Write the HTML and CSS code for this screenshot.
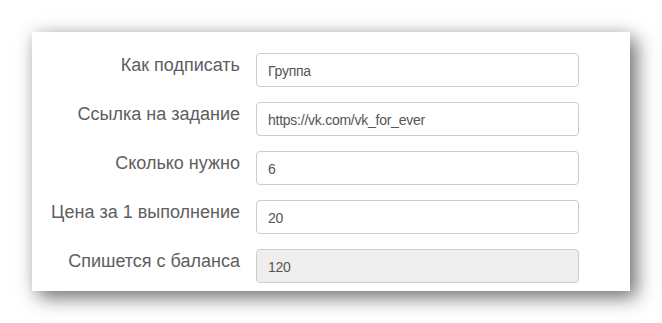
FILE: index.html
```html
<!DOCTYPE html>
<html lang="ru">
<head>
<meta charset="utf-8">
<link rel="stylesheet" href="styles.css">
</head>
<body>
<div class="page">
  <form class="card">
    <div class="row">
      <label class="label">Как подписать</label>
      <div class="field">Группа</div>
    </div>
    <div class="row">
      <label class="label">Ссылка на задание</label>
      <div class="field">https://vk.com/vk_for_ever</div>
    </div>
    <div class="row">
      <label class="label">Сколько нужно</label>
      <div class="field">6</div>
    </div>
    <div class="row">
      <label class="label">Цена за 1 выполнение</label>
      <div class="field">20</div>
    </div>
    <div class="row">
      <label class="label">Спишется с баланса</label>
      <div class="field field-disabled">120</div>
    </div>
  </form>
</div>
</body>
</html>
```
FILE: styles.css
```css
html, body {
  margin: 0;
  padding: 0;
  background: #fff;
}
.page {
  padding: 32px 32px 32px 32px;
  height: 323px;
  box-sizing: border-box;
}
.card {
  width: 598px;
  height: 259px;
  box-sizing: border-box;
  background: #fff;
  padding: 21px 51px 8px 0;
  display: flex;
  flex-direction: column;
  gap: 15px;
  box-shadow: 0 0 16px rgba(0, 0, 0, 0.12), 7px 7px 18px rgba(0, 0, 0, 0.5);
  font-family: "Liberation Sans", Arial, sans-serif;
}
.row {
  display: flex;
  gap: 16px;
  height: 34px;
}
.label {
  width: 208px;
  text-align: right;
  font-size: 18px;
  line-height: 20px;
  padding-top: 2px;
  color: #5e5e5e;
}
.field {
  flex: 1;
  box-sizing: border-box;
  height: 34px;
  border: 1px solid #cccccc;
  border-radius: 4px;
  padding: 2px 11px 0;
  font-size: 14px;
  letter-spacing: -0.25px;
  line-height: 30px;
  color: #555;
  background: #fff;
}
.field-disabled {
  background: #eeeeee;
}
```
